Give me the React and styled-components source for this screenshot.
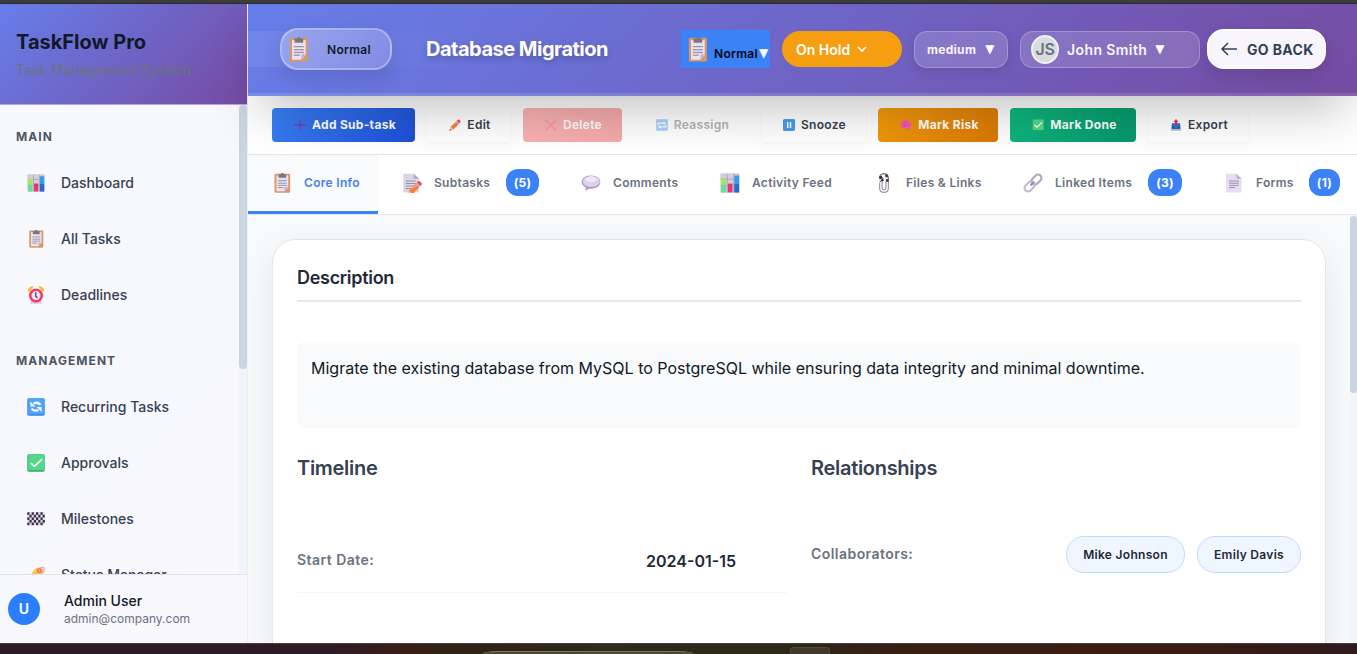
import React from "react";
import styled, { createGlobalStyle, css } from "styled-components";

const Global = createGlobalStyle`
  *, *::before, *::after { box-sizing: border-box; }
  html, body { margin: 0; padding: 0; overflow: hidden; }
  body { font-family: Inter, "Liberation Sans", sans-serif; color: #111827; }
  button { font-family: inherit; border: 0; padding: 0; margin: 0; background: none; }
`;

const Screen = styled.div`
  width: 1357px;
  height: 654px;
  display: flex;
  flex-direction: column;
  overflow: hidden;
`;

const WindowEdge = styled.div`
  height: 4px;
  flex: none;
  background: #3b3b3e;
  border-bottom: 1px solid #2d2d30;
`;

const Page = styled.div`
  height: 639px;
  flex: none;
  display: flex;
  overflow: hidden;
`;

/* ---------- sidebar ---------- */

const Sidebar = styled.aside`
  width: 248px;
  flex: none;
  display: flex;
  flex-direction: column;
  border-right: 1px solid #eceef5;
  background: linear-gradient(135deg, #f7f9fe 0%, #f7f8fd 60%, #f8f7fc 100%);
`;

const Brand = styled.div`
  height: 101px;
  flex: none;
  padding: 26px 16px 0;
  border-bottom: 1px solid #b5a8dd;
  background: linear-gradient(135deg, #667eea 0%, #764ba2 100%);
`;

const BrandName = styled.div`
  font-size: 20px;
  line-height: 25px;
  font-weight: 700;
  color: #111827;
`;

const BrandTag = styled.div`
  margin-top: 5px;
  font-size: 14px;
  line-height: 20px;
  color: #6b7280;
`;

const NavArea = styled.div`
  height: 469px;
  flex: none;
  display: flex;
  overflow: hidden;
`;

const Nav = styled.nav`
  flex: 1;
  padding-top: 21px;
`;

const NavHeading = styled.div`
  height: 22px;
  margin-top: ${(p) => p.$top || 0}px;
  padding-left: 16px;
  font-size: 12px;
  line-height: 22px;
  font-weight: 700;
  letter-spacing: 1.05px;
  color: #4b5563;
`;

const NavGroup = styled.div`
  padding-top: 7px;
`;

const NavItem = styled.div`
  height: 56px;
  display: flex;
  align-items: center;
  gap: 16px;
  padding-left: 27px;
`;

const NavText = styled.span`
  padding-bottom: 2px;
  font-size: 14px;
  font-weight: 500;
  color: #374151;
`;

const SideTrack = styled.div`
  width: 8px;
  background: #f1f5f9;
`;

const Thumb = styled.div`
  height: ${(p) => p.$h}px;
  border-radius: 4px;
  background: #cbd5e1;
`;

const Profile = styled.div`
  flex: 1;
  display: flex;
  align-items: center;
  gap: 24px;
  padding-left: 8px;
  border-top: 1px solid #e1e4ea;
`;

const ProfileMark = styled.div`
  width: 32px;
  height: 32px;
  border-radius: 50%;
  background: #2b7fff;
  color: #fff;
  font-size: 14px;
  font-weight: 600;
  line-height: 32px;
  text-align: center;
`;

const ProfileName = styled.div`
  font-size: 14px;
  line-height: 18px;
  font-weight: 500;
  color: #111827;
`;

const ProfileMail = styled.div`
  font-size: 12px;
  line-height: 17px;
  color: #6b7280;
`;

/* ---------- header ---------- */

const Main = styled.main`
  flex: 1;
  display: flex;
  flex-direction: column;
  min-width: 0;
`;

const Header = styled.header`
  position: relative;
  z-index: 3;
  height: 92px;
  flex: none;
  display: flex;
  align-items: center;
  padding: 1px 31px 0 32px;
  color: #fff;
  border-bottom: 3px solid rgba(255, 255, 255, 0.13);
  background: linear-gradient(90deg, rgba(255,255,255,0.07), rgba(255,255,255,0) 240px) 0 27px / 100% 36px no-repeat,
    linear-gradient(135deg, #667eea 0%, #764ba2 100%) border-box;
  box-shadow: 0 25px 50px -12px rgba(0, 0, 0, 0.25);
`;

const TypePill = styled.div`
  width: 112px;
  height: 42px;
  display: flex;
  align-items: center;
  padding-left: 5px;
  gap: 17px;
  border: 2px solid rgba(255, 255, 255, 0.3);
  border-radius: 18px;
  background: linear-gradient(135deg, rgba(255,255,255,0.28), rgba(255,255,255,0.14));
  box-shadow: 0 8px 20px rgba(0, 0, 0, 0.11);
  color: #111827;
  font-size: 12px;
  font-weight: 600;
  letter-spacing: 0.3px;
`;

const Title = styled.h1`
  margin: 0 0 0 34px;
  width: 255px;
  font-size: 20px;
  line-height: 28px;
  font-weight: 700;
  letter-spacing: -0.5px;
  text-shadow: 0 3px 6px rgba(0, 0, 0, 0.22);
`;

const TypeSelect = styled.button`
  width: 89px;
  height: 38px;
  display: flex;
  align-items: center;
  gap: 5px;
  padding-left: 5px;
  background: #3b82f6;
  color: #020617;
  font-size: 12px;
  font-weight: 600;
  letter-spacing: 0.3px;
`;

const SelectText = styled.span`
  display: flex;
  align-items: center;
  gap: 1px;
  padding-top: 8px;
`;

const Caret = styled.span`
  font-family: "DejaVu Sans", sans-serif;
  font-size: ${(p) => p.$size || 12}px;
  line-height: 1;
  letter-spacing: 0;
  color: #fff;
`;

const StatusPill = styled.button`
  width: 120px;
  height: 36px;
  margin-left: 12px;
  display: flex;
  align-items: center;
  gap: 6px;
  padding-left: 14px;
  border-radius: 18px;
  background: #f59e0f;
  color: #fff;
  font-size: 14px;
  font-weight: 600;
`;

const GlassPill = styled.button`
  width: ${(p) => p.$w}px;
  height: 37px;
  margin-left: 12px;
  display: flex;
  align-items: center;
  gap: ${(p) => p.$gap}px;
  padding-left: ${(p) => p.$pad}px;
  border: 1px solid rgba(255, 255, 255, 0.24);
  border-radius: 13px;
  background: rgba(255, 255, 255, 0.15);
  box-shadow: ${(p) => (p.$raised ? "0 4px 12px rgba(0,0,0,0.1)" : "none")};
  color: #f8f7ff;
  font-size: ${(p) => p.$fs}px;
  font-weight: ${(p) => p.$fw || 600};
  letter-spacing: ${(p) => p.$ls || 0}px;
`;

const Initials = styled.span`
  width: 28px;
  height: 29px;
  flex: none;
  border: 2px solid #edf0f2;
  border-radius: 50%;
  background: #d8dce0;
  color: #6b7280;
  font-size: 16px;
  line-height: 24px;
  letter-spacing: -0.3px;
  text-align: center;
`;

const BackButton = styled.button`
  width: 119px;
  height: 40px;
  margin-left: 7px;
  display: flex;
  align-items: center;
  gap: 9px;
  padding-left: 11px;
  border: 2px solid #fff;
  border-radius: 17px;
  background: #f7f5fb;
  box-shadow: 0 8px 20px rgba(0, 0, 0, 0.12);
  color: #334155;
  font-size: 14px;
  font-weight: 700;
  letter-spacing: 0.35px;
`;

/* ---------- toolbar and tabs ---------- */

const Toolbar = styled.div`
  height: 59px;
  flex: none;
  display: flex;
  gap: 12px;
  padding: 12px 24px 0;
  border-bottom: 1px solid #e5e7eb;
  background: #fff;
`;

const tones = {
  plain: css`color: #374151; background: #fff; box-shadow: 0 1px 3px rgba(0,0,0,0.05);`,
  blue: css`color: #fff; background: linear-gradient(135deg, #3b82f6, #1d4ed8);`,
  red: css`color: #fff; background: linear-gradient(135deg, #fab4b4, #f5a8a8); & > svg { opacity: 0.5; }`,
  muted: css`color: #b1b5bc; background: #fff; & > svg { opacity: 0.45; }`,
  amber: css`color: #fff; background: linear-gradient(135deg, #f59e0b, #d97706);`,
  green: css`color: #fff; background: linear-gradient(135deg, #10b981, #059669);`,
};

const Action = styled.button`
  width: ${(p) => p.$w}px;
  height: 34px;
  display: flex;
  align-items: center;
  justify-content: center;
  gap: 6px;
  padding-left: ${(p) => (p.$strong ? 3 : 2)}px;
  border-radius: 4px;
  font-size: 12px;
  font-weight: ${(p) => (p.$strong ? 700 : 600)};
  letter-spacing: 0.3px;
  white-space: nowrap;
  ${(p) => tones[p.$tone]}
`;

const ActionLabel = styled.span`
  padding-bottom: 2px;
`;

const Tabs = styled.div`
  height: 60px;
  flex: none;
  display: flex;
  border-bottom: 1px solid #e5e7eb;
  background: #fff;
`;

const Tab = styled.div`
  width: ${(p) => p.$w}px;
  flex: none;
  display: flex;
  align-items: center;
  padding: 0 18px 1px 24px;
  border-bottom: 3px solid ${(p) => (p.$active ? "#3b82f6" : "transparent")};
  background: ${(p) => (p.$active ? "#f8fafc" : "transparent")};
  color: ${(p) => (p.$active ? "#4a80ee" : "#6b7280")};
  font-size: 12px;
  font-weight: 600;
  letter-spacing: 0.3px;
  white-space: nowrap;

  &:last-child {
    padding-right: 17px;
  }
`;

const TabLabel = styled.span`
  margin-left: 12px;
  padding-bottom: 1px;
`;

const Count = styled.span`
  width: ${(p) => p.$w}px;
  height: 27px;
  margin-left: auto;
  border-radius: 12px;
  background: #3b82f6;
  color: #fff;
  font-size: 12px;
  line-height: 27px;
  font-weight: 700;
  text-align: center;
`;

/* ---------- content ---------- */

const Content = styled.section`
  flex: 1;
  min-height: 0;
  display: flex;
  overflow: hidden;
  background: #f8fafc;
`;

const Scroller = styled.div`
  width: 1102px;
  flex: none;
  padding: 24px 24px 0;
  overflow: hidden;
`;

const PageTrack = styled.div`
  flex: 1;
  padding-top: 1px;
  background: #f1f5f9;
`;

const Card = styled.article`
  height: 560px;
  padding: 24px;
  border: 1px solid #e3e6ea;
  border-radius: 24px;
  background: #fff;
  box-shadow: 0 10px 40px rgba(0, 0, 0, 0.08);
`;

const CardTitle = styled.h2`
  margin: 0;
  height: 38px;
  border-bottom: 2px solid #e5e7eb;
  font-size: 18px;
  line-height: 28px;
  font-weight: 600;
  letter-spacing: -0.3px;
  color: #1f2937;
`;

const Note = styled.p`
  margin: 40px 0 0;
  height: 86px;
  padding: 13px 14px;
  border-radius: 8px;
  background: #f8fafc;
  font-size: 16px;
  line-height: 26px;
  color: #111827;
`;

const Columns = styled.div`
  display: grid;
  grid-template-columns: 490px 490px;
  gap: 24px;
  margin-top: 26px;
`;

const ColumnTitle = styled.h3`
  margin: 0;
  font-size: 20px;
  line-height: 28px;
  font-weight: 600;
  letter-spacing: -0.3px;
  color: #374151;
`;

const Field = styled.div`
  display: flex;
  align-items: center;
  justify-content: space-between;
  height: ${(p) => p.$h}px;
  margin-top: ${(p) => p.$top}px;
  border-bottom: ${(p) => (p.$line ? "1px solid #f3f4f6" : "0")};
`;

const FieldName = styled.span`
  padding-bottom: 2px;
  font-size: 14px;
  font-weight: 600;
  letter-spacing: 0.45px;
  color: #6b7280;
`;

const FieldValue = styled.span`
  padding: 2px 51px 0 0;
  font-size: 16px;
  font-weight: 600;
  color: #1f2937;
`;

const People = styled.div`
  display: flex;
  gap: 12px;
`;

const Person = styled.span`
  width: ${(p) => p.$w}px;
  height: 37px;
  border: 1px solid #bfdbfe;
  border-radius: 18px;
  background: #eff6ff;
  font-size: 12px;
  line-height: 35px;
  font-weight: 600;
  letter-spacing: 0.3px;
  text-align: center;
  color: #1f2937;
`;

/* ---------- desktop taskbar ---------- */

const Taskbar = styled.div`
  height: 11px;
  flex: none;
  display: flex;
  align-items: flex-end;
  overflow: hidden;
  border-top: 1px solid #4b3d40;
  background: linear-gradient(90deg, #2a1b25 0, #2d1b27 330px, #3b1d14 405px, #2f2216 450px, #2e2918 600px, #2c2717 780px, #391d13 930px, #3a1b13 1180px, #2f1a1c 1357px);
`;

const TaskSearch = styled.div`
  width: 212px;
  height: 3px;
  margin-left: 482px;
  border-top: 1px solid #7b7566;
  border-radius: 16px 16px 0 0 / 3px 3px 0 0;
  background: #4a4535;
`;

const TaskButton = styled.div`
  width: 40px;
  height: 7px;
  margin-left: 96px;
  border: 1px solid #51493a;
  border-bottom: 0;
  border-radius: 4px 4px 0 0;
  background: #40392b;
`;

/* ---------- pictograms ---------- */

const lines = (x, ys, w, c = "#9a94a8") =>
  ys.map((y, i) => <rect key={y} x={x} y={y} width={i === ys.length - 1 ? w * 0.6 : w} height="1.6" fill={c} />);

const pencil = (
  <g>
    <path d="M1 31l4-11L18 7l7 7-13 13z" fill="#ff9a4a" />
    <path d="M5 20l7 7L25 14l-3-3z" fill="#f27d3c" />
    <path d="M1 31l4-11 7 7z" fill="#f3c9a5" />
    <path d="M1 31l1.600-4.500 3 3z" fill="#45364f" />
    <path d="M18 7l3-3 7 7-3 3z" fill="#b8b0c8" />
    <path d="M21 4l2-2q2-2 4.500 0l2.500 2.500q2 2.500 0 4.500l-2 2z" fill="#f8475a" />
  </g>
);

const art = {
  chart: (
    <>
      <rect x="0.500" y="0.500" width="31" height="31" rx="2" fill="#d5cddc" />
      <path d="M1 10H31M1 20H31M11.500 1V31M22 1V31" stroke="#aaa0b5" strokeWidth="1.300" />
      <rect x="2" y="8" width="7.500" height="23" fill="#a4e565" />
      <rect x="2" y="19" width="7.500" height="12" fill="#65dd9b" />
      <rect x="12.500" y="17" width="7.500" height="14" fill="#e83572" />
      <rect x="23" y="4" width="7.500" height="27" fill="#2f9fec" />
      <rect x="23" y="18" width="7.500" height="13" fill="#2969cf" />
    </>
  ),
  clipboard: (
    <>
      <rect x="4" y="1" width="25" height="30.500" rx="2" fill="#dc9566" />
      <path d="M7 4H26V23L20 29H7z" fill="#e8e1f0" />
      <path d="M26 22L20 29V23q0-1 1-1z" fill="#c2b1d2" />
      <path d="M10.500 2h3q3-4 6 0h3v5.500H10.500z" fill="#7d7482" />
      {lines(9.500, [11.500, 15.500, 19, 22.500], 14)}
    </>
  ),
  alarm: (
    <>
      <path d="M5 31.500l4-7h14l4 7z" fill="#d9c4ec" />
      <path d="M1.500 9.500Q2 0.500 12 0.500L4 10zM30.500 9.500Q30 0.500 20 0.500l8 9.500z" fill="#ffb320" />
      <circle cx="16" cy="17" r="12.500" fill="#f43b62" />
      <circle cx="16" cy="17" r="8" fill="#eee3f7" />
      <path d="M15.500 11v7l3 3" fill="none" stroke="#49375b" strokeWidth="2.200" />
    </>
  ),
  recur: (
    <>
      <rect x="0.500" y="0.500" width="31" height="31" rx="3" fill="#3385e8" />
      <rect x="2" y="1" width="29" height="28" rx="2" fill="#4ea5fb" />
      <path d="M24 12Q18 6 12 10M8 19q6 6 12 2" fill="none" stroke="#fff" strokeWidth="4" />
      <path d="M6 6v9h9zM26 25v-9h-9z" fill="#fff" />
    </>
  ),
  check: (
    <>
      <rect x="0.500" y="0.500" width="31" height="31" rx="3" fill="#31a96d" />
      <rect x="2" y="1" width="29" height="28" rx="2" fill="#52d889" />
      <path d="M7 16l6 6L27 9" fill="none" stroke="#fff" strokeWidth="3" />
    </>
  ),
  checkered: (
    <>
      <rect x="0.500" y="4" width="31" height="23" rx="2" fill="#dfd6ea" />
      {Array.from({ length: 40 }, (_, i) => {
        const r = Math.floor(i / 8);
        const c = i % 8;
        return (r + c) % 2 ? null : (
          <rect key={i} x={0.5 + c * 3.9} y={4 + r * 4.6} width="3.9" height="4.6" fill="#3c2f48" />
        );
      })}
    </>
  ),
  label: (
    <>
      <path d="M3 20L15 5q3-3 8-3 5 1 6 5 0 5-2 8L14 29z" fill="#ffc43e" />
      <circle cx="22" cy="8" r="4" fill="#ef5948" />
      <circle cx="22" cy="8" r="1.800" fill="#f8e8f0" />
      <path d="M22 8q2-8 8-5 3 7-4 10" fill="none" stroke="#c7a5dd" strokeWidth="1.800" />
    </>
  ),
  plus: <path d="M16 1v30M1 16h30" stroke="#72479f" strokeWidth="3.600" />,
  cross: <path d="M3 3l26 26M29 3L3 29" stroke="#ff7fb0" strokeWidth="4" strokeLinecap="round" />,
  pencil,
  repeat: (
    <>
      <rect x="0.500" y="0.500" width="31" height="31" rx="3" fill="#4298f3" />
      <path d="M6 16v-5h15M26 16v5H11" fill="none" stroke="#fff" strokeWidth="3.200" />
      <path d="M20 6l7 5-7 5zM12 16l-7 5 7 5z" fill="#fff" />
    </>
  ),
  pause: (
    <>
      <rect x="0.500" y="0.500" width="31" height="31" rx="3" fill="#2d79dc" />
      <rect x="2" y="1" width="29" height="28" rx="2" fill="#479cf5" />
      <path d="M12.500 8v16M20 8v16" stroke="#fff" strokeWidth="4" />
    </>
  ),
  brain: (
    <>
      <path d="M2 19Q0 11 5 8q4-6 12-6 6 0 8 4 6 4 5 11 0 7-5 7l-1 6h-5l-2-6q-5 3-9-1-4 0-6-4z" fill="#f45fb0" />
      <path d="M7 13q5-2 7 2M13 8q4 0 5 3M18 17q5-4 8 1M10 19q4-2 6 1" fill="none" stroke="#c23a91" strokeWidth="1.800" />
    </>
  ),
  outbox: (
    <>
      <path d="M4 16h24l2 15H2z" fill="#c9b9d9" />
      <path d="M5 11h22v15H5z" fill="#247fd1" />
      <path d="M5 20h6l2 3h6l2-3h6v6H5z" fill="#1a5ca8" />
      <path d="M16 0l7 8h-4v10h-6V8H9z" fill="#e52d58" />
    </>
  ),
  memo: (
    <>
      <path d="M2 1h17l8 8v22H2z" fill="#dcd5e5" />
      <path d="M19 1l8 8h-8z" fill="#b4a9c3" />
      {lines(6, [12, 16, 20, 24], 16)}
      <g transform="translate(7 12) scale(.8)">{pencil}</g>
    </>
  ),
  speech: (
    <>
      <path d="M16 4c9 0 15 4.500 15 10.500S25 25 17 25q-2 0-4-.3L7 29l1-6Q1 20 1 14.500C1 8.500 7 4 16 4z" fill="#ac99c4" />
      <ellipse cx="16.500" cy="13.500" rx="13.500" ry="8.800" fill="#ddd3e8" />
      <ellipse cx="16" cy="10" rx="9" ry="4.500" fill="#eee8f5" />
    </>
  ),
  clips: (
    <>
      <path d="M9 16v8q0 7 7 7t7-7V15M13 14v10q0 3 3 3t3-3V14" fill="none" stroke="#9c94a6" strokeWidth="1.900" />
      <path d="M9 10q-1-8 6-9 7 0 8 6v8M9 15l6-7" fill="none" stroke="#7d7486" strokeWidth="1.900" />
      <path d="M8 6l4-2 2 4-4 2zM18 2l4 1 0 4-4-1zM11 11l3-2 2 3-3 2zM19 10l4 0 0 4-4 0z" fill="#34263b" />
    </>
  ),
  link: (
    <g fill="none" strokeWidth="3.500">
      <rect x="12.500" y="5" width="18" height="11" rx="5.500" transform="rotate(-45 21.500 10.500)" stroke="#b3a7c0" />
      <rect x="1.500" y="16" width="18" height="11" rx="5.500" transform="rotate(-45 10.500 21.500)" stroke="#c4b9d0" />
      <path d="M12 20l6-6" stroke="#9e91ad" />
    </g>
  ),
  page: (
    <>
      <path d="M3 1h17l8 8v22H3z" fill="#e6deef" />
      <path d="M20 1l8 8h-8z" fill="#bdb2ca" />
      {lines(8, [12, 15.500, 19, 22.500], 16)}
    </>
  ),
};

const Pict = styled.svg`
  flex: none;
  display: block;
`;

const Icon = ({ name, size = 20, height }) => (
  <Pict width={size} height={height || size} viewBox="0 0 32 32" preserveAspectRatio="none" aria-hidden="true">
    {art[name]}
  </Pict>
);

const mainNav = [["chart", "Dashboard"], ["clipboard", "All Tasks"], ["alarm", "Deadlines"]];
const manageNav = [
  ["recur", "Recurring Tasks"],
  ["check", "Approvals"],
  ["checkered", "Milestones"],
  ["label", "Status Manager"],
];

const actions = [
  ["plus", "Add Sub-task", 143, "blue", true],
  ["pencil", "Edit", 84, "plain"],
  ["cross", "Delete", 99, "red"],
  ["repeat", "Reassign", 115, "muted"],
  ["pause", "Snooze", 105, "plain"],
  ["brain", "Mark Risk", 120, "amber", true],
  ["check", "Mark Done", 126, "green", true],
  ["outbox", "Export", 100, "plain"],
];

const tabs = [
  ["clipboard", "Core Info", 130],
  ["memo", "Subtasks", 179, "(5)", 33],
  ["speech", "Comments", 139],
  ["chart", "Activity Feed", 154],
  ["clips", "Files & Links", 149],
  ["link", "Linked Items", 201, "(3)", 34],
  ["page", "Forms", 157, "(1)", 31],
];

const renderNav = ([icon, text]) => (
  <NavItem key={text}>
    <Icon name={icon} size={18} />
    <NavText>{text}</NavText>
  </NavItem>
);

export default function App() {
  return (
    <Screen>
      <Global />
      <WindowEdge />
      <Page>
        <Sidebar>
          <Brand>
            <BrandName>TaskFlow Pro</BrandName>
            <BrandTag>Task Management System</BrandTag>
          </Brand>
          <NavArea>
            <Nav>
              <NavHeading>MAIN</NavHeading>
              <NavGroup>{mainNav.map(renderNav)}</NavGroup>
              <NavHeading $top={27}>MANAGEMENT</NavHeading>
              <NavGroup>{manageNav.map(renderNav)}</NavGroup>
            </Nav>
            <SideTrack><Thumb $h={264} /></SideTrack>
          </NavArea>
          <Profile>
            <ProfileMark>U</ProfileMark>
            <div>
              <ProfileName>Admin User</ProfileName>
              <ProfileMail>admin@company.com</ProfileMail>
            </div>
          </Profile>
        </Sidebar>
        <Main>
          <Header>
            <TypePill>
              <Icon name="clipboard" size={23} height={25} />
              Normal
            </TypePill>
            <Title>Database Migration</Title>
            <TypeSelect>
              <Icon name="clipboard" size={23} height={25} />
              <SelectText>Normal<Caret>▼</Caret></SelectText>
            </TypeSelect>
            <StatusPill>
              On Hold
              <svg width="12" height="12" viewBox="0 0 12 12" fill="none" stroke="#fff" strokeWidth="1.700">
                <path d="M2 4l4 4 4-4" />
              </svg>
            </StatusPill>
            <GlassPill $w={94} $pad={12} $gap={9} $fs={12} $fw={700} $ls={0.3} $raised>
              medium<Caret>▼</Caret>
            </GlassPill>
            <GlassPill $w={180} $pad={10} $gap={8} $fs={14} $ls={0.4}>
              <Initials>JS</Initials>
              John Smith<Caret>▼</Caret>
            </GlassPill>
            <BackButton>
              <svg width="18" height="16" viewBox="0 0 18 16" fill="none" stroke="#334155" strokeWidth="1.500">
                <path d="M17 8H2M8 2L2 8l6 6" />
              </svg>
              GO BACK
            </BackButton>
          </Header>
          <Toolbar>
            {actions.map(([icon, text, w, tone, strong]) => (
              <Action key={text} $w={w} $tone={tone} $strong={strong}>
                <Icon name={icon} size={12} />
                <ActionLabel>{text}</ActionLabel>
              </Action>
            ))}
          </Toolbar>
          <Tabs>
            {tabs.map(([icon, text, w, count, cw], i) => (
              <Tab key={text} $w={w} $active={i === 0}>
                <Icon name={icon} size={20} />
                <TabLabel>{text}</TabLabel>
                {count && <Count $w={cw}>{count}</Count>}
              </Tab>
            ))}
          </Tabs>
          <Content>
            <Scroller>
              <Card>
                <CardTitle>Description</CardTitle>
                <Note>
                  Migrate the existing database from MySQL to PostgreSQL while ensuring data integrity and minimal
                  downtime.
                </Note>
                <Columns>
                  <div>
                    <ColumnTitle>Timeline</ColumnTitle>
                    <Field $h={65} $top={46} $line>
                      <FieldName>Start Date:</FieldName>
                      <FieldValue>2024-01-15</FieldValue>
                    </Field>
                  </div>
                  <div>
                    <ColumnTitle>Relationships</ColumnTitle>
                    <Field $h={37} $top={54}>
                      <FieldName>Collaborators:</FieldName>
                      <People>
                        <Person $w={119}>Mike Johnson</Person>
                        <Person $w={104}>Emily Davis</Person>
                      </People>
                    </Field>
                  </div>
                </Columns>
              </Card>
            </Scroller>
            <PageTrack><Thumb $h={177} /></PageTrack>
          </Content>
        </Main>
      </Page>
      <Taskbar>
        <TaskSearch />
        <TaskButton />
      </Taskbar>
    </Screen>
  );
}
